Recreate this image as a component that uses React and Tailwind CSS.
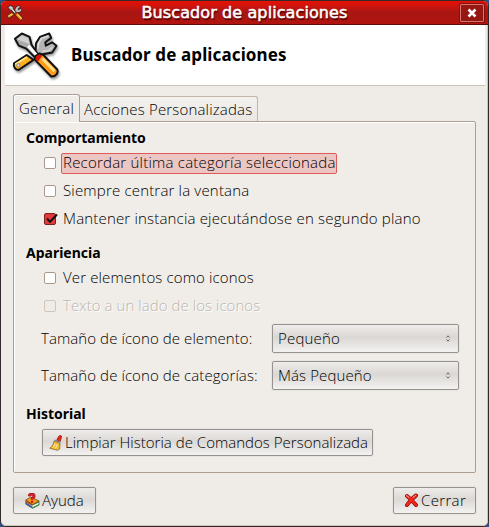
import React from 'react';

const BORDER = 'border-[#ab9d90]';

function ToolsIcon({ size, shadow = true }) {
  return (
    <svg
      width={size}
      height={size}
      viewBox="0 0 48 48"
      className={`block shrink-0 overflow-visible ${shadow ? 'drop-shadow-[1px_2px_1px_rgba(0,0,0,0.4)]' : ''}`}
    >
      <path d="M2 32 15 23.500l7 5L7 38.500c-3 1-6-3-5-6.500z" fill="#ffb01c" stroke="#111" strokeWidth="2" strokeLinejoin="round" />
      <path d="M4 32.500 14.500 26" stroke="#ffe48a" strokeWidth="2" strokeLinecap="round" />
      <circle cx="6.500" cy="34" r="1.700" fill="#ddd" stroke="#777" strokeWidth=".8" />
      <path d="m24 20 .5-8.500L28.500 5l9.500-3.500L40 6l-6 4.500.5 3.500 6.500-3.500 4.500 3.500-4.500 7-8 1.500-5 1z" fill="#b5b5b5" stroke="#111" strokeWidth="2" strokeLinejoin="round" />
      <path d="m26.500 17 .5-5 3-5.500 7-2.500" fill="none" stroke="#e0e0e0" strokeWidth="1.500" />
      <path d="M31 19.500h5.500l5-4" fill="none" stroke="#d6d6d6" strokeWidth="1.500" />
      <path d="m3 7 7-5.500L18 5l2 8 6.500 10-3 3L14.500 17 7 14z" fill="#aaa" stroke="#111" strokeWidth="2" strokeLinejoin="round" />
      <path d="m5 7.500 5-4 6.500 3 1.500 6z" fill="#d0d0d0" />
      <path d="m16.500 14 8.500 9.500" stroke="#fff" strokeWidth="3" />
      <path d="m23 28 1-3.500 4-2.500 4 1.500 14 14.500c2 3-1 8-6 7.500z" fill="#ff9a1a" stroke="#111" strokeWidth="2" strokeLinejoin="round" />
      <path d="m24 28 .8-3L28 23l3 1-4.500 6.500z" fill="#d3140c" />
      <path d="m32 28 10.500 11" stroke="#ffdf86" strokeWidth="3" strokeLinecap="round" />
    </svg>
  );
}

function BroomIcon() {
  return (
    <svg width="14" height="16" viewBox="0 0 14 16" className="block shrink-0">
      <path d="M7.500 5.500 9.700 1.300c.8-1.400 3.300-.9 2.900.8L11 7z" fill="#e22b20" stroke="#8e1712" strokeWidth=".7" />
      <path d="m5 6 6 2.200-.3 5.800-2.200 1.300L.8 13.200C3.500 11.500 4.500 9 5 6z" fill="#f2bd3d" stroke="#86641e" strokeWidth=".8" />
      <path d="m5.500 5.300 5.800 2.200" stroke="#8a8a8a" strokeWidth="1.800" />
      <path d="M4 12.500 6 9M6.500 13.500l1.500-4" stroke="#fff0a0" strokeWidth="1" />
    </svg>
  );
}

function HelpIcon() {
  return (
    <svg width="15" height="16" viewBox="0 0 15 16" className="block shrink-0">
      <path d="m.8 7.500 6.700 3.500 6.500-3v4l-6.500 3.300L.8 11z" fill="#f4f4ee" stroke="#164b22" strokeWidth=".7" />
      <path d="m.8 7.500 6.700 4v1.500L.8 9.500z" fill="#bf4a0e" />
      <path d="m.8 9.500 6.700 4v1.800L.8 11.500z" fill="#2e5cad" />
      <path d="m7.500 11.500 6.500-3v1l-6.500 3z" fill="#2c8a3b" />
      <path d="m7.500 14.200 6.500-3.200v1l-6.500 3.300z" fill="#2c8a3b" />
      <path d="m.8 7 5-3 8.200 4-6.500 3.500z" fill="#f59a1c" stroke="#6f3b08" strokeWidth=".7" />
      <path d="M4.200 3.200C4.600.4 9.300.400 9.100 3.100 9 4.800 7 4.800 7 6.500" fill="none" stroke="#7e0a10" strokeWidth="2.800" />
      <path d="M4.200 3.200C4.600.4 9.300.400 9.100 3.100 9 4.800 7 4.800 7 6.500" fill="none" stroke="#e0202a" strokeWidth="1.900" />
      <circle cx="7" cy="8.700" r="1.200" fill="#c8121b" />
    </svg>
  );
}

function CrossIcon() {
  return (
    <svg width="15" height="15" viewBox="0 0 15 15" className="block shrink-0">
      <path d="M3 3q4 3 9 9M12 2.500Q7 6 3 12" stroke="#8d0d08" strokeWidth="4" strokeLinecap="round" fill="none" />
      <path d="M3 3q4 3 9 9M12 2.500Q7 6 3 12" stroke="#f2271a" strokeWidth="2.600" strokeLinecap="round" fill="none" />
      <path d="m2.500 2.700 2.500 1.600M11.500 2.500 9 4.300" stroke="#ffa79b" strokeWidth="1" strokeLinecap="round" />
    </svg>
  );
}

function Check({ checked, disabled, focused, children, className = 'tracking-[0.18px]' }) {
  return (
    <div className="flex h-7 items-center pl-[30px]">
      <span
        className={`flex size-3 shrink-0 items-center justify-center rounded-[2px] border ${
          checked ? 'border-[#7d2020] bg-[#e23a3a]' : disabled ? 'border-[#d0c5bb] bg-[#efebe7]' : 'border-[#ab9a8b] bg-white'
        }`}
      >
        {checked && (
          <svg width="13" height="12" viewBox="0 0 13 12" className="-mr-[3px] shrink-0">
            <path d="m2 5.500 3 3.300L12 1.500" fill="none" stroke="#111" strokeWidth="2" />
          </svg>
        )}
      </span>
      <span
        className={`ml-[5px] flex h-[21px] items-center rounded-[2px] border px-px pb-[2px] ${
          focused ? 'w-[276px] border-[#e05a5a] bg-[#ecc6c3]' : 'border-transparent'
        } ${disabled ? 'text-[#bab6b2] [text-shadow:1px_1px_0_#fff]' : ''} ${className}`}
      >
        {children}
      </span>
    </div>
  );
}

function Select({ label, value, valueClass = '' }) {
  return (
    <div className="flex h-[29px] items-center pl-[27px]">
      <span className="w-[231px] shrink-0 pb-[2px] tracking-[0.08px]">{label}</span>
      <div className="flex h-[29px] w-[187px] items-center rounded-[2px] border border-[#96928f] bg-linear-to-b from-[#efedeb] from-0% via-[#dad7d4] via-45% to-[#f3f2f0] pr-[7px] pl-[5px] shadow-[0_0_0_1px_#e8e4df]">
        <span className={`flex-1 pb-[2px] ${valueClass}`}>{value}</span>
        <svg width="6" height="7" viewBox="0 0 6 7">
          <path d="M1.500 2.500 3 .8l1.500 1.700M1.500 4.500 3 6.200l1.500-1.700" fill="none" stroke="#555" strokeWidth=".9" />
        </svg>
      </div>
    </div>
  );
}

const buttonClass =
  'flex h-[27px] items-center rounded-[2px] border border-[#96928f] bg-linear-to-b from-[#efedeb] from-0% via-[#dbd8d5] via-45% to-[#f3f2f0] shadow-[0_0_0_1px_#e8e4df]';

const headingClass = "h-5 pl-3 font-['Noto_Sans'] text-[14px] leading-[18px] font-bold";

export default function App() {
  return (
    <div className="h-[527px] w-[489px] overflow-hidden bg-[#2c4f8a]">
      <div className="flex h-full flex-col overflow-hidden rounded-[6px] border border-[#332b2b] bg-[#efebe7] font-['Open_Sans',sans-serif] text-[15px] leading-5 font-light whitespace-nowrap text-black">
        <div className="flex h-6 shrink-0 items-center border-b border-[#5e0c0a] bg-linear-to-b from-[#e81004] from-0% via-[#a81612] via-50% to-[#b3140f] pr-[4px] pl-[6px]">
          <ToolsIcon size={16} shadow={false} />
          <h1 className="flex-1 pt-px pl-[6px] text-center font-['DejaVu_Sans'] text-[16px] font-normal tracking-[0.1px] text-white [-webkit-text-stroke:0.5px_white] [text-shadow:1px_2px_1px_#400]">
            Buscador de aplicaciones
          </h1>
          <div className="flex h-[18px] w-6 items-center justify-center rounded-[1px] border border-[#d57570] bg-[#971713] shadow-[0_0_0_1px_#85100c]">
            <svg width="10" height="10" viewBox="0 0 10 10">
              <path d="m1.500 1.500 7 7m0-7-7 7" stroke="#fff" strokeWidth="2.600" />
            </svg>
          </div>
        </div>
        <div className="flex min-h-0 flex-1 flex-col rounded-b-[5px] border-r border-b border-[#cfc4ba]">
          <div className="mr-[2px] ml-1 flex h-[61px] shrink-0 items-center border-b border-[#cdc4ba] bg-white pl-[7px]">
            <ToolsIcon size={47} />
            <h2 className="pl-3 font-['Noto_Sans'] text-[17px] font-bold tracking-[0.12px] text-black">Buscador de aplicaciones</h2>
          </div>

          <div className="mt-2 ml-3 flex h-[27px] shrink-0 items-end">
            <div className={`relative z-10 -mb-px flex h-7 w-[67px] items-center rounded-t-[3px] border border-b-0 ${BORDER} bg-[#f0ede9] pl-[5px] shadow-[inset_1px_1px_0_#fff]`}>
              <span className="pb-[2px] tracking-[0.25px]">General</span>
            </div>
            <div className="flex h-[25px] w-[178px] items-center rounded-tr-[3px] border border-b-0 border-l-0 border-[#c2b6aa] bg-linear-to-b from-[#f3f1ee] to-[#ebe7e3] pl-1">
              <span className="tracking-[0.17px]">Acciones Personalizadas</span>
            </div>
          </div>

          <div className={`ml-3 h-[352px] w-[463px] shrink-0 rounded-[2px] rounded-tl-none border ${BORDER} bg-[#f0ede8] pt-[7px] shadow-[inset_1px_1px_0_#fff]`}>
            <h3 className={headingClass}>Comportamiento</h3>
            <Check focused className="tracking-[0.22px]">Recordar última categoría seleccionada</Check>
            <Check>Siempre centrar la ventana</Check>
            <Check checked>Mantener instancia ejecutándose en segundo plano</Check>
            <h3 className={`mt-[11px] ${headingClass}`}>Apariencia</h3>
            <Check className="tracking-[0.14px]">Ver elementos como iconos</Check>
            <Check disabled className="tracking-[0.05px]">Texto a un lado de los iconos</Check>
            <div className="mt-1 flex flex-col gap-2">
              <Select label="Tamaño de ícono de elemento:" value="Pequeño" valueClass="tracking-[0.2px]" />
              <Select label="Tamaño de ícono de categorías:" value="Más Pequeño" valueClass="tracking-[0.1px]" />
            </div>
            <h3 className={`mt-[15px] mb-1 ${headingClass}`}>Historial</h3>
            <button className={`ml-7 w-[331px] pl-[6px] ${buttonClass}`}>
              <BroomIcon />
              <span className="pb-px pl-[2px] tracking-[0.02px]">Limpiar Historia de Comandos Personalizada</span>
            </button>
          </div>

          <div className="mt-[14px] ml-3 flex w-[463px] justify-between">
            <button className={`w-[83px] pl-[11px] ${buttonClass}`}>
              <HelpIcon />
              <span className="pb-px pl-[2px]">Ayuda</span>
            </button>
            <button className={`w-[83px] pl-[10px] ${buttonClass}`}>
              <CrossIcon />
              <span className="pb-px pl-[2px] tracking-[0.35px]">Cerrar</span>
            </button>
          </div>
        </div>
      </div>
    </div>
  );
}
